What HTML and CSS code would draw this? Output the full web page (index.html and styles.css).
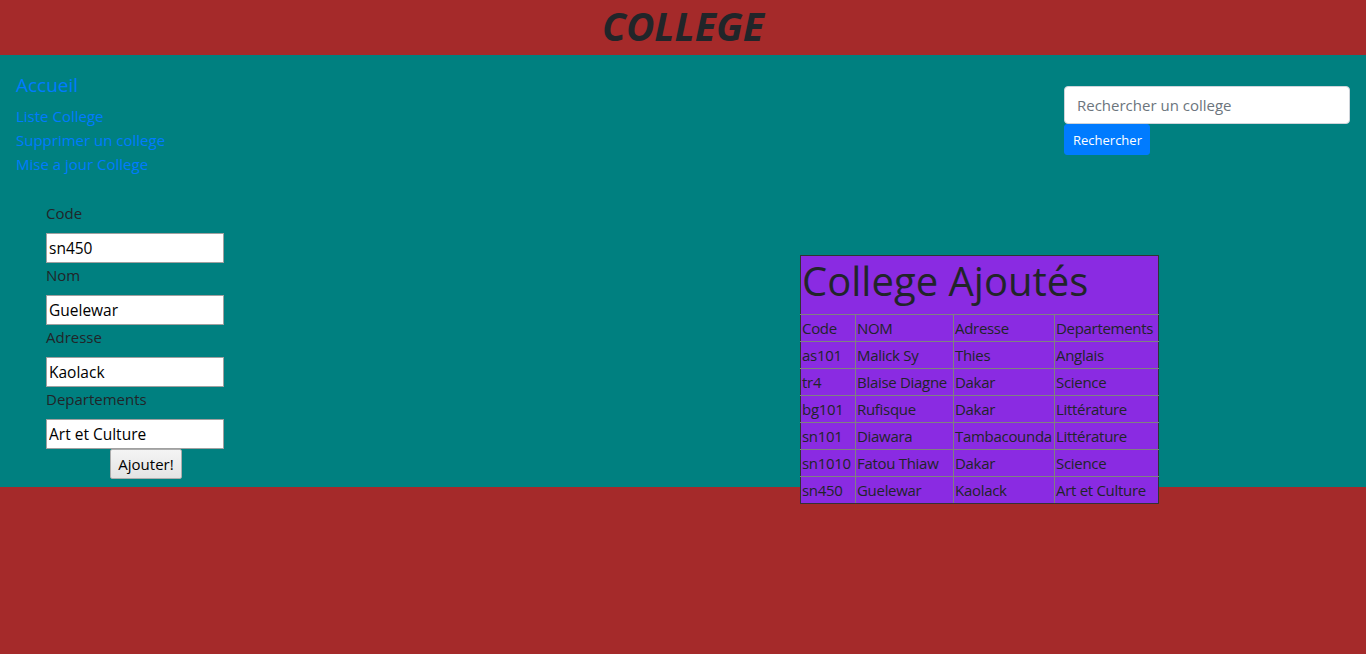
FILE: index.html
```html
<!DOCTYPE html>
<html lang="fr">
<head>
<meta charset="utf-8">
<title>College</title>
<link rel="stylesheet" href="styles.css">
</head>
<body>
<header class="top">
  <h1 class="brand">COLLEGE</h1>
</header>
<main class="content">
  <div class="top-row">
    <nav class="nav">
      <a class="nav-home" href="#">Accueil</a>
      <a class="nav-link" href="#">Liste College</a>
      <a class="nav-link" href="#">Supprimer un college</a>
      <a class="nav-link" href="#">Mise a jour College</a>
    </nav>
    <form class="search">
      <input class="search-input" type="text" placeholder="Rechercher un college">
      <button class="search-btn" type="button">Rechercher</button>
    </form>
  </div>
  <div class="bottom-row">
    <form class="add-form">
      <label class="lbl">Code</label>
      <input class="field" type="text" value="sn450">
      <label class="lbl">Nom</label>
      <input class="field" type="text" value="Guelewar">
      <label class="lbl">Adresse</label>
      <input class="field" type="text" value="Kaolack">
      <label class="lbl">Departements</label>
      <input class="field" type="text" value="Art et Culture">
      <button class="add-btn" type="button">Ajouter!</button>
    </form>
    <table class="list">
      <colgroup>
        <col class="c1"><col class="c2"><col class="c3"><col class="c4">
      </colgroup>
      <thead>
        <tr><th colspan="4" class="list-title"><h2>College Ajoutés</h2></th></tr>
      </thead>
      <tbody>
        <tr><td>Code</td><td>NOM</td><td>Adresse</td><td>Departements</td></tr>
        <tr><td>as101</td><td>Malick Sy</td><td>Thies</td><td>Anglais</td></tr>
        <tr><td>tr4</td><td>Blaise Diagne</td><td>Dakar</td><td>Science</td></tr>
        <tr><td>bg101</td><td>Rufisque</td><td>Dakar</td><td>Littérature</td></tr>
        <tr><td>sn101</td><td>Diawara</td><td>Tambacounda</td><td>Littérature</td></tr>
        <tr><td>sn1010</td><td>Fatou Thiaw</td><td>Dakar</td><td>Science</td></tr>
        <tr><td>sn450</td><td>Guelewar</td><td>Kaolack</td><td>Art et Culture</td></tr>
      </tbody>
    </table>
  </div>
</main>
</body>
</html>
```

FILE: styles.css
```css
* { box-sizing: border-box; }

html {
  background: #a52a2a;
}

body {
  margin: 0;
  min-height: 654px;
  background: #a52a2a;
  font-family: "Open Sans", "Noto Sans", sans-serif;
  font-size: 16px;
  line-height: 1.5;
  color: #212529;
}

.top {
  height: 55px;
  text-align: center;
  padding-top: 3px;
}

.brand {
  margin: 0;
  font-size: 39px;
  font-weight: 700;
  font-style: italic;
  line-height: 1.2;
  color: #212529;
}

.content {
  background: #008080;
  height: 432px;
  padding: 18px 16px 0 16px;
}

.top-row {
  display: flex;
  justify-content: space-between;
  align-items: flex-start;
}

.nav {
  display: flex;
  flex-direction: column;
}

.nav-home {
  color: #007bff;
  text-decoration: none;
  font-size: 19px;
  line-height: 24px;
  margin-bottom: 7px;
}

.nav-link {
  color: #007bff;
  text-decoration: none;
  font-size: 15px;
  line-height: 24px;
}

.search {
  display: flex;
  flex-direction: column;
  align-items: flex-start;
  width: 286px;
  margin-top: 13px;
}

.search-input {
  width: 286px;
  height: 38px;
  padding: 6px 12px;
  font-family: inherit;
  font-size: 15px;
  color: #495057;
  background: #fff;
  border: 1px solid #ced4da;
  border-radius: 4px;
}

.search-input::placeholder { color: #6c757d; }

.search-btn {
  width: 86px;
  height: 31px;
  padding: 0 8px;
  font-family: inherit;
  font-size: 13px;
  color: #fff;
  background: #007bff;
  border: 1px solid #007bff;
  border-radius: 3px;
}

.bottom-row {
  display: flex;
  align-items: flex-start;
  margin-top: 25px;
}

.add-form {
  width: 200px;
  margin-left: 30px;
  display: flex;
  flex-direction: column;
  align-items: flex-start;
  flex-shrink: 0;
}

.lbl {
  font-size: 15px;
  line-height: 24px;
  margin-bottom: 8px;
  color: #212529;
}

.field {
  width: 178px;
  height: 30px;
  padding: 1px 2px;
  font-family: inherit;
  font-size: 15.5px;
  color: #000;
  background: #fff;
  border: 1px solid #a0a0a0;
}

.add-btn {
  align-self: center;
  width: 72px;
  height: 30px;
  padding: 0 4px;
  font-family: inherit;
  font-size: 15px;
  color: #000;
  background: linear-gradient(#f4f4f4, #e4e4e4);
  border: 1px solid #adadad;
  border-radius: 2px;
}

.list {
  margin-left: 554px;
  margin-top: 54px;
  border-collapse: collapse;
  background: #8a2be2;
  border: 1px solid #333;
  width: 358px;
  table-layout: fixed;
  flex-shrink: 0;
}

.list td, .list th {
  border: 1px solid #808080;
  padding: 1px;
  font-size: 15px;
  line-height: 24px;
  font-weight: 400;
  text-align: left;
  white-space: nowrap;
  letter-spacing: -0.3px;
  color: #212529;
}

.list td:first-child { border-left-color: #333; }
.list td:last-child { border-right-color: #333; }
.list tbody tr:last-child td { border-bottom-color: #333; }

.list .list-title {
  border: 1px solid #333;
  border-bottom-color: #808080;
}

.list-title h2 {
  margin: 0 0 8px 0;
  font-size: 40px;
  line-height: 48px;
  font-weight: 500;
  letter-spacing: 0;
}

.c1 { width: 55px; }
.c2 { width: 98px; }
.c3 { width: 101px; }
.c4 { width: 104px; }
```
